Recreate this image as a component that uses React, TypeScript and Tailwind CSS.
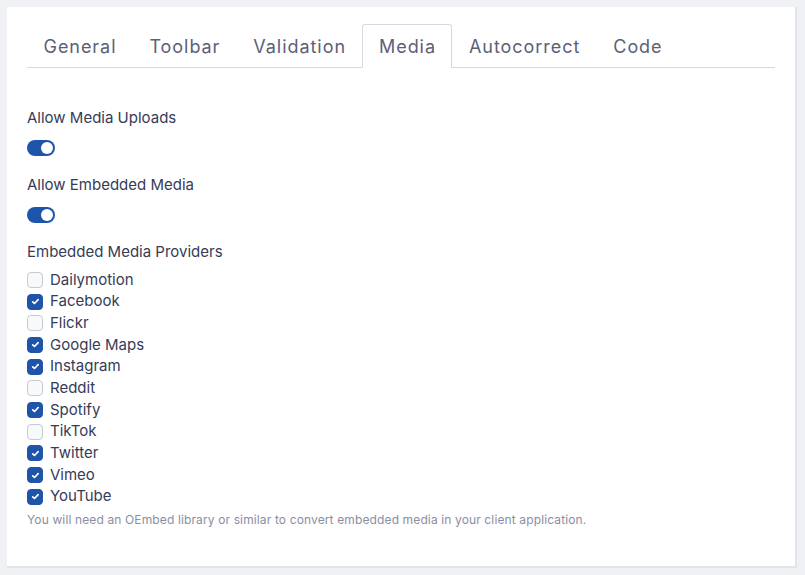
import { useState } from "react";

const tabs = ["General", "Toolbar", "Validation", "Media", "Autocorrect", "Code"];

const providers: Array<[string, boolean]> = [
    ["Dailymotion", false],
    ["Facebook", true],
    ["Flickr", false],
    ["Google Maps", true],
    ["Instagram", true],
    ["Reddit", false],
    ["Spotify", true],
    ["TikTok", false],
    ["Twitter", true],
    ["Vimeo", true],
    ["YouTube", true],
];

function Toggle({ on }: { on: boolean }) {
    return (
        <button
            type="button"
            className={`flex h-4 w-7 items-center rounded-full px-[2px] ${
                on ? "justify-end bg-[#1f54ab]" : "justify-start bg-[#c9cdd8]"
            }`}
        >
            <span className="h-3 w-3 rounded-full bg-white" />
        </button>
    );
}

function Check({ checked }: { checked: boolean }) {
    return (
        <span
            className={`flex h-4 w-4 items-center justify-center rounded-[4px] border ${
                checked
                    ? "border-[#1f54ab] bg-[#1f54ab]"
                    : "border-[#c6cad6] bg-[#f8f9fb]"
            }`}
        >
            {checked && (
                <svg viewBox="0 0 16 16" className="h-[9px] w-[9px]" fill="none">
                    <path
                        d="M3 8.5l3.2 3 6.5-6.8"
                        stroke="white"
                        strokeWidth="3"
                        strokeLinecap="round"
                        strokeLinejoin="round"
                    />
                </svg>
            )}
        </span>
    );
}

export default function App() {
    const [active] = useState("Media");

    return (
        <div
            className="min-h-[575px] w-full bg-[#f0f1f5] p-[7px] pr-[8px]"
            style={{ fontFamily: "Inter, 'Noto Sans', sans-serif" }}
        >
            <div className="h-[561px] w-[790px] border-r-2 border-b-2 border-[#e3e5ec] bg-white px-5 pt-[17px]">
                <ul className="flex border-b border-[#d5d8e0]">
                    {tabs.map((tab) => (
                        <li
                            key={tab}
                            className={`-mb-px flex h-[44px] items-center px-[15.5px] text-[18px] tracking-[0.95px] text-[#5b6079] ${
                                tab === active
                                    ? "rounded-t-[3px] border border-b-white border-[#d5d8e0]"
                                    : "border border-transparent"
                            }`}
                        >
                            {tab}
                        </li>
                    ))}
                </ul>

                <div className="pt-[39px] text-[15px] text-[#363b58]">
                    <div className="leading-[22px]">Allow Media Uploads</div>
                    <div className="mt-[11px]">
                        <Toggle on />
                    </div>
                    <div className="mt-[18px] leading-[22px]">Allow Embedded Media</div>
                    <div className="mt-[11px]">
                        <Toggle on />
                    </div>
                    <div className="mt-[18px] leading-[22px]">Embedded Media Providers</div>
                    <ul className="mt-[6px]">
                        {providers.map(([name, checked]) => (
                            <li key={name} className="flex h-[21.7px] items-center gap-[7px]">
                                <Check checked={checked} />
                                <span>{name}</span>
                            </li>
                        ))}
                    </ul>
                    <p className="mt-[3px] text-[12px] leading-[18px] tracking-[0.13px] text-[#8a8ea3]">
                        You will need an OEmbed library or similar to convert embedded media in
                        your client application.
                    </p>
                </div>
            </div>
        </div>
    );
}
